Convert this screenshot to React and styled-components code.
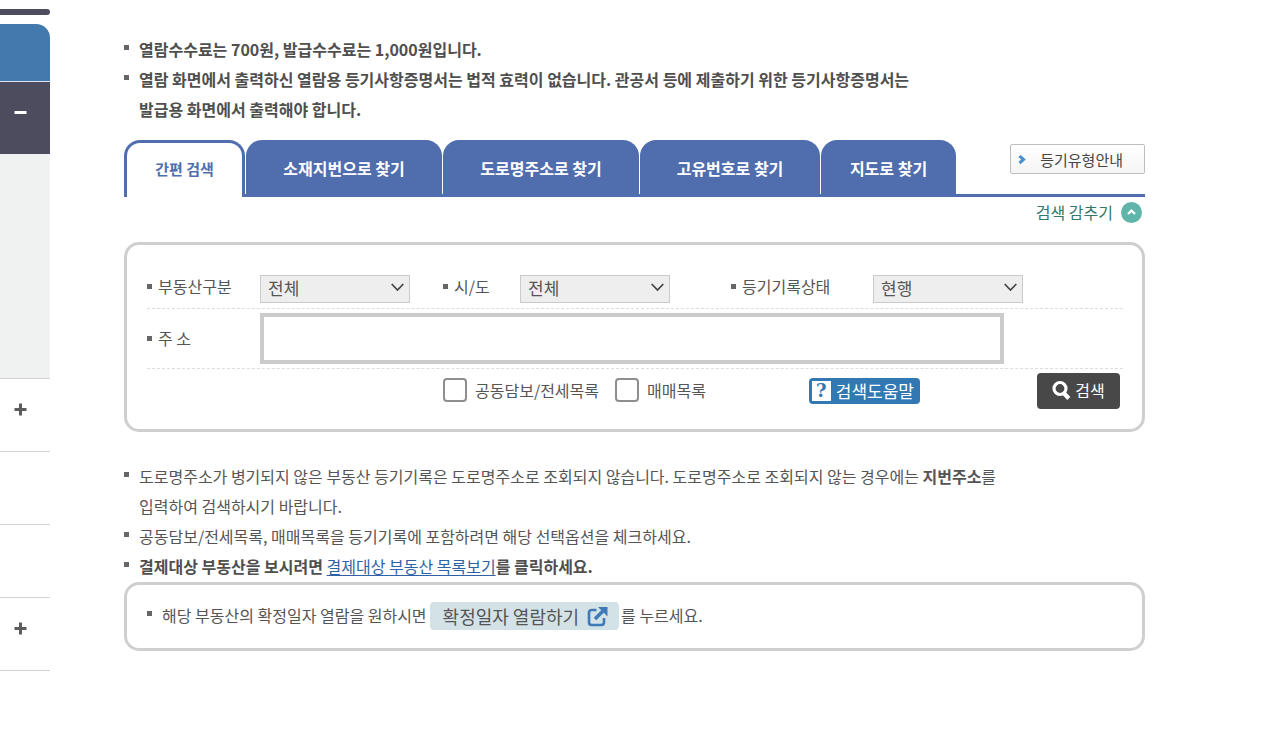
import React from "react";
import styled, { createGlobalStyle } from "styled-components";

const GlobalStyle = createGlobalStyle`
  * {
    box-sizing: border-box;
  }

  body {
    margin: 0;
    background: #fff;
    color: #555;
    font-family: "Noto Sans CJK KR", sans-serif;
    font-size: 16px;
    line-height: 30px;
    overflow-x: hidden;
  }

  button, input, select {
    font: inherit;
    color: inherit;
    margin: 0;
  }
`;

// #region styled-components
const Page = styled.div`
  display: flex;
  align-items: flex-start;
`;

const Side = styled.nav`
  flex: 0 0 50px;
  padding-top: 9px;
`;

const SideStrip = styled.div`
  height: 6px;
  margin-bottom: 9px;
  background: #4d4b5e;
  border-radius: 0 3px 3px 0;
`;

const SideHead = styled.div`
  height: 58px;
  background: #437aad;
  border-bottom: 1px solid #dde6ee;
  border-radius: 0 14px 0 0;
`;

const SideItem = styled.button`
  display: flex;
  justify-content: flex-start;
  width: 100%;
  height: ${({ $open }) => ($open ? "72px" : "73px")};
  padding: 24px 14px;
  border: 0;
  border-bottom: ${({ $open }) => ($open ? "0" : "1px solid #d2d2d2")};
  background: ${({ $open }) => ($open ? "#4d4b5e" : "#fff")};
  color: ${({ $open }) => ($open ? "#fff" : "#5c5c5c")};

  svg {
    flex: none;
  }
`;

const SidePanel = styled.div`
  height: 225px;
  background: #eff2f1;
  border-bottom: 1px solid #d2d2d2;
`;

const Main = styled.main`
  flex: 1;
  min-width: 0;
  padding: 34px 120px 40px 74px;
`;

const NoteList = styled.ul`
  margin: 0;
  padding: 0;
  list-style: none;
`;

const Note = styled.li`
  display: grid;
  grid-template-columns: 15px 1fr;
  font-weight: ${({ $bold }) => ($bold ? 700 : 400)};
  color: ${({ $bold }) => ($bold ? "#4f4f4f" : "#555")};

  &::before {
    content: "";
    width: 5px;
    height: 5px;
    margin-top: 11px;
    background: #666;
  }

  a {
    color: #2f62a5;
    font-weight: 400;
    text-underline-offset: 2px;
  }
`;

const TabBar = styled.div`
  display: flex;
  height: 57px;
  margin-top: 16px;
  border-bottom: 3px solid #506eae;
`;

const Tab = styled.button`
  min-width: ${({ $width }) => $width}px;
  margin: ${({ $active }) => ($active ? "0 1px -3px 0" : "0 1px 0 0")};
  padding: ${({ $active }) => ($active ? "0 0 3px" : "0 0 2px")};
  border: 3px solid #506eae;
  border-bottom: 0;
  border-radius: 16px 16px 0 0;
  background: ${({ $active }) => ($active ? "#fff" : "#506eae")};
  color: ${({ $active }) => ($active ? "#506eae" : "#fff")};
  font-size: ${({ $active }) => ($active ? "15px" : "16px")};
  font-weight: 700;
`;

const GuideButton = styled.button`
  display: flex;
  align-items: center;
  gap: 14px;
  height: 30px;
  margin: 4px 0 0 auto;
  padding: 2px 21px 0 7px;
  border: 1px solid #bdbdbd;
  border-radius: 2px;
  background: linear-gradient(#fff, #f5f5f5);
  color: #444;
  font-size: 15px;
`;

const ToggleButton = styled.button`
  display: flex;
  align-items: center;
  gap: 8px;
  height: 30px;
  margin: 0 0 15px auto;
  padding: 0 3px;
  border: 0;
  background: none;
  color: #35786a;
`;

const Box = styled.div`
  border: 3px solid #cfcfcf;
  border-radius: 15px;
  background: #fff;
`;

const SearchBox = styled(Box).attrs({ as: "form" })`
  display: block;
  padding: 20px 19px 17px 20px;
`;

const SearchRow = styled.div`
  display: grid;
  grid-template-columns: 113px 183px 77px 211px 142px 1fr;
  align-items: center;
  min-height: ${({ $height }) => $height}px;
  border-bottom: ${({ $last }) => ($last ? "0" : "1px dashed #ddd")};
`;

const FieldLabel = styled.label`
  display: flex;
  align-items: center;
  gap: 6px;
  padding-bottom: 2px;

  &::before {
    content: "";
    width: 5px;
    height: 5px;
    margin-top: 2px;
    background: #666;
  }
`;

const SelectWrap = styled.div`
  position: relative;
  width: 150px;
  height: 28px;

  select {
    width: 100%;
    height: 100%;
    padding: 0 7px 2px;
    appearance: none;
    border: 1px solid #cacaca;
    border-radius: 0;
    background: #eee;
    font-size: 17px;
    line-height: 24px;
  }

  svg {
    position: absolute;
    top: 10px;
    right: 6px;
    pointer-events: none;
  }
`;

const AddressInput = styled.input`
  grid-column: 2 / -1;
  width: calc(100% - 119px);
  height: 51px;
  padding: 0 10px;
  border: 4px solid #cbcbcb;
  border-radius: 0;
`;

const Actions = styled.div`
  grid-column: 3 / -1;
  display: flex;
  align-items: center;
  padding-right: 3px;
`;

const CheckLabel = styled.label`
  display: flex;
  align-items: center;
  gap: 8px;
  margin-right: 16px;
  padding-bottom: 2px;

  input {
    width: 24px;
    height: 24px;
    appearance: none;
    border: 2px solid #8e8e8e;
    border-radius: 4px;
    background: #fff;
  }

  input:checked {
    background: #437aad;
  }
`;

const HelpButton = styled.button`
  display: flex;
  align-items: center;
  gap: 5px;
  height: 26px;
  margin-left: auto;
  padding: 0 6px 0 3px;
  border: 0;
  border-radius: 4px;
  background: #3278b2;
  color: #fff;
  font-size: 17px;
  line-height: 24px;
`;

const HelpMark = styled.span`
  width: 19px;
  height: 20px;
  background: #fff;
  color: #3278b2;
  font-family: "DejaVu Serif", serif;
  font-size: 18px;
  font-weight: 700;
  line-height: 20px;
  text-align: center;
`;

const SearchButton = styled.button`
  display: flex;
  align-items: center;
  justify-content: center;
  gap: 4px;
  width: 83px;
  height: 36px;
  margin-left: 117px;
  padding: 0 0 2px;
  border: 0;
  border-radius: 4px;
  background: #484848;
  color: #fff;
`;

const BottomNotes = styled(NoteList)`
  margin-top: 29px;
`;

const DateBox = styled(Box)`
  margin-top: 1px;
  padding: 15px 20px 18px;
`;

const DateLine = styled.div`
  display: flex;
  align-items: center;
  flex-wrap: wrap;
`;

const DateButton = styled.button`
  display: inline-flex;
  align-items: center;
  gap: 8px;
  height: 28px;
  margin: 2px 2px 0 3px;
  padding: 0 11px 0 13px;
  border: 0;
  border-radius: 4px;
  background: #d3e2e7;
  font-size: 18px;
  line-height: 28px;
`;
// #endregion

const PlusIcon = () => (
    <svg width="13" height="13" viewBox="0 0 13 13">
        <path d="M6.5 0.5v12M0.5 6.5h12" stroke="currentColor" strokeWidth="3" />
    </svg>
);

const MinusIcon = () => (
    <svg width="13" height="13" viewBox="0 0 13 13">
        <path d="M0.5 6.5h12" stroke="currentColor" strokeWidth="3" />
    </svg>
);

const SelectField = ({ id, value }) => (
    <SelectWrap>
        <select id={id} defaultValue={value}>
            <option>{value}</option>
        </select>
        <svg width="13" height="9" viewBox="0 0 13 9" fill="none">
            <path d="M0.7 1l5.8 6 5.8-6" stroke="#444" strokeWidth="1.7" />
        </svg>
    </SelectWrap>
);

const TABS = [
    { label: "간편 검색", width: 121 },
    { label: "소재지번으로 찾기", width: 196 },
    { label: "도로명주소로 찾기", width: 196 },
    { label: "고유번호로 찾기", width: 180 },
    { label: "지도로 찾기", width: 135 },
];

const App = () => {
    const [tab, setTab] = React.useState(0);
    const [open, setOpen] = React.useState(true);

    return (
        <>
            <GlobalStyle />
            <Page>
                <Side>
                    <SideStrip />
                    <SideHead />
                    <SideItem $open aria-expanded="true"><MinusIcon /></SideItem>
                    <SidePanel />
                    <SideItem aria-expanded="false"><PlusIcon /></SideItem>
                    <SideItem />
                    <SideItem />
                    <SideItem aria-expanded="false"><PlusIcon /></SideItem>
                </Side>

                <Main>
                    <NoteList>
                        <Note $bold>
                            <span>열람수수료는 700원, 발급수수료는 1,000원입니다.</span>
                        </Note>
                        <Note $bold>
                            <span>
                                열람 화면에서 출력하신 열람용 등기사항증명서는 법적 효력이 없습니다. 관공서 등에 제출하기 위한 등기사항증명서는
                                <br />
                                발급용 화면에서 출력해야 합니다.
                            </span>
                        </Note>
                    </NoteList>

                    <TabBar>
                        {TABS.map((item, i) => (
                            <Tab
                                key={item.label}
                                type="button"
                                $width={item.width}
                                $active={tab === i}
                                onClick={() => setTab(i)}
                            >
                                {item.label}
                            </Tab>
                        ))}
                        <GuideButton type="button">
                            <svg width="8" height="10" viewBox="0 0 8 10" fill="none">
                                <path d="M1.5 1L5.5 4.5l-4 3.5" stroke="#4a90cf" strokeWidth="3" />
                            </svg>
                            등기유형안내
                        </GuideButton>
                    </TabBar>

                    <ToggleButton type="button" onClick={() => setOpen(!open)}>
                        검색 감추기
                        <svg width="21" height="21" viewBox="0 0 21 21" fill="none">
                            <circle cx="10.5" cy="10.5" r="10.5" fill="#5fb5a9" />
                            <path d="M7 12l3.5-3.3L14 12" stroke="#fff" strokeWidth="2.4" />
                        </svg>
                    </ToggleButton>

                    {open && (
                        <SearchBox onSubmit={(e) => e.preventDefault()}>
                            <SearchRow $height={44}>
                                <FieldLabel htmlFor="kind">부동산구분</FieldLabel>
                                <SelectField id="kind" value="전체" />
                                <FieldLabel htmlFor="region">시/도</FieldLabel>
                                <SelectField id="region" value="전체" />
                                <FieldLabel htmlFor="status">등기기록상태</FieldLabel>
                                <SelectField id="status" value="현행" />
                            </SearchRow>
                            <SearchRow $height={60}>
                                <FieldLabel htmlFor="address">주 소</FieldLabel>
                                <AddressInput id="address" type="text" />
                            </SearchRow>
                            <SearchRow $height={43} $last>
                                <Actions>
                                    <CheckLabel>
                                        <input type="checkbox" />
                                        공동담보/전세목록
                                    </CheckLabel>
                                    <CheckLabel>
                                        <input type="checkbox" />
                                        매매목록
                                    </CheckLabel>
                                    <HelpButton type="button">
                                        <HelpMark>?</HelpMark>
                                        검색도움말
                                    </HelpButton>
                                    <SearchButton type="submit">
                                        <svg width="19" height="20" viewBox="0 0 19 20" fill="none">
                                            <circle cx="8" cy="8.5" r="6" stroke="#fff" strokeWidth="3.2" />
                                            <path d="M12.2 13.5l4.6 5" stroke="#fff" strokeWidth="4.2" />
                                        </svg>
                                        검색
                                    </SearchButton>
                                </Actions>
                            </SearchRow>
                        </SearchBox>
                    )}

                    <BottomNotes>
                        <Note>
                            <span>
                                도로명주소가 병기되지 않은 부동산 등기기록은 도로명주소로 조회되지 않습니다. 도로명주소로 조회되지 않는 경우에는 <b>지번주소</b>를
                                <br />
                                입력하여 검색하시기 바랍니다.
                            </span>
                        </Note>
                        <Note>
                            <span>공동담보/전세목록, 매매목록을 등기기록에 포함하려면 해당 선택옵션을 체크하세요.</span>
                        </Note>
                        <Note $bold>
                            <span>
                                결제대상 부동산을 보시려면 <a href="#list">결제대상 부동산 목록보기</a>를 클릭하세요.
                            </span>
                        </Note>
                    </BottomNotes>

                    <DateBox>
                        <NoteList>
                            <Note>
                                <DateLine>
                                    해당 부동산의 확정일자 열람을 원하시면
                                    <DateButton type="button">
                                        확정일자 열람하기
                                        <svg width="21" height="21" viewBox="0 0 21 21" fill="none">
                                            <path
                                                d="M9.5 4H4.6C3 4 2 5 2 6.4v10.2C2 18 3 19 4.6 19h9.8c1.6 0 2.6-1 2.6-2.4V12"
                                                stroke="#4079b5"
                                                strokeWidth="2.6"
                                            />
                                            <path d="M8 13L16.5 4.5" stroke="#4079b5" strokeWidth="3.6" />
                                            <path d="M11 1h9.5v9.5z" fill="#4079b5" />
                                        </svg>
                                    </DateButton>
                                    를 누르세요.
                                </DateLine>
                            </Note>
                        </NoteList>
                    </DateBox>
                </Main>
            </Page>
        </>
    );
};

export default App;
